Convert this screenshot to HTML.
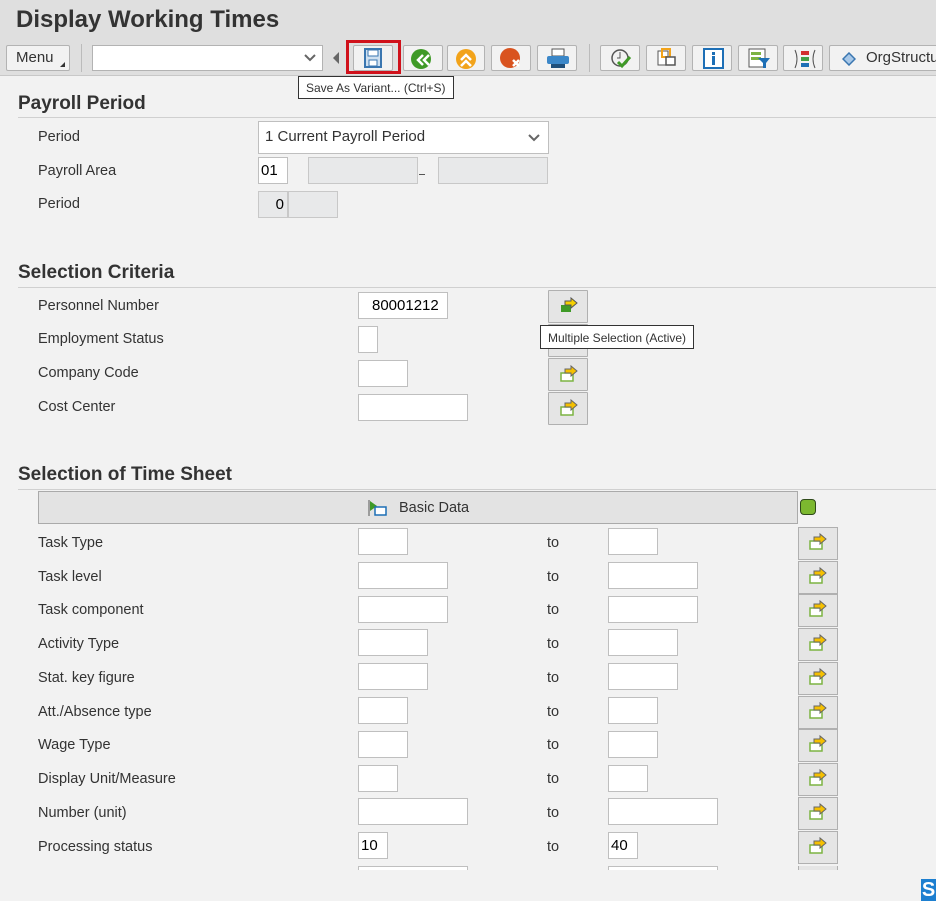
<!DOCTYPE html>
<html><head><meta charset="utf-8"><style>
*{box-sizing:border-box;margin:0;padding:0}
body{width:940px;height:910px;background:#fff;font-family:"Liberation Sans",Arial,sans-serif;position:relative;overflow:hidden;color:#333}
#app{position:absolute;left:0;top:0;width:936px;height:901px;background:#f2f2f2;overflow:hidden}
.hdr{position:absolute;left:0;top:0;width:936px;height:76px;background:#dfdfdf;border-bottom:1px solid #c8c8c8}
h1{position:absolute;left:16px;top:6px;font-size:24px;font-weight:bold;color:#333}
.a{position:absolute}
.tb{position:absolute;top:45px;height:26px;border:1px solid #b3b3b3;background:#f2f2f2;border-radius:2px}
.lbl{position:absolute;left:38px;font-size:14.5px;color:#333}
.h2{position:absolute;left:18px;font-size:19px;font-weight:bold;color:#333}
.line{position:absolute;left:18px;width:918px;height:1px;background:#d0d0d0}
.in{position:absolute;height:27px;background:#fff;border:1px solid #bfbfbf;font-size:15px;padding:4px 0 0 2px;color:#000}
.ro{position:absolute;height:27px;background:#e8e9ea;border:1px solid #c8c8c8}
.btn{position:absolute;width:40px;height:33px;background:#e5e5e5;border:1px solid #b0b0b0;border-radius:1px}
.to{position:absolute;left:547px;font-size:14.5px;color:#333}
.tip{position:absolute;background:#fff;border:1px solid #333;font-size:12px;color:#333;padding:4px 7px;white-space:nowrap}
</style></head><body>
<div id="app">
<div class="hdr"></div>
<h1>Display Working Times</h1>
<div class="tb" style="left:6px;width:64px;font-size:15px;padding:3px 0 0 9px;color:#333">Menu<span style="position:absolute;right:4px;bottom:3px;width:0;height:0;border-left:5px solid transparent;border-bottom:5px solid #333"></span></div>
<div class="a" style="left:81px;top:44px;width:1px;height:28px;background:#bbb"></div>
<div class="tb" style="left:92px;width:231px;background:#fff;border-radius:0"><svg class="a" style="right:6px;top:8px" width="12" height="8"><path d="M1 1l5 5 5-5" stroke="#666" stroke-width="2" fill="none"/></svg></div>
<svg class="a" style="left:333px;top:52px" width="6" height="12"><path d="M6 0v12L0 6z" fill="#666"/></svg>
<div class="tb" style="left:353px;width:40px"><svg class="a" style="left:9px;top:2px" width="20" height="20"><rect x="2" y="1" width="16" height="18" fill="#cfe0f0" stroke="#3a76b0" stroke-width="2"/><rect x="5" y="2" width="10" height="6" fill="#fff" stroke="#3a76b0"/><rect x="6" y="12" width="8" height="6" fill="#fff" stroke="#3a76b0"/></svg></div>
<div class="a" style="left:346px;top:40px;width:55px;height:34px;border:3px solid #d0111b"></div>
<div class="tb" style="left:403px;width:40px"><svg class="a" style="left:6px;top:2px" width="24" height="22"><circle cx="11" cy="11" r="10" fill="#3f9a27"/><path d="M19 7l-5 5 5 5M13 7l-5 5 5 5" stroke="#fff" stroke-width="2.5" fill="none"/></svg></div>
<div class="tb" style="left:447px;width:38px"><svg class="a" style="left:7px;top:2px" width="22" height="22"><circle cx="11" cy="11" r="10" fill="#f2a31a"/><path d="M6 12l5-5 5 5M6 18l5-5 5 5" stroke="#fff" stroke-width="2.5" fill="none"/></svg></div>
<div class="tb" style="left:491px;width:40px"><svg class="a" style="left:8px;top:2px" width="24" height="22"><circle cx="10" cy="10" r="10" fill="#d9531f"/><path d="M13 12l6 6M19 12l-6 6" stroke="#fff" stroke-width="2.5"/></svg></div>
<div class="tb" style="left:537px;width:40px"><svg class="a" style="left:8px;top:2px" width="24" height="22"><rect x="6" y="1" width="12" height="7" fill="#fff" stroke="#555"/><rect x="1" y="8" width="22" height="8" rx="2" fill="#3b87c8"/><rect x="5" y="16" width="14" height="4" fill="#1f4f7a"/></svg></div>
<div class="a" style="left:589px;top:44px;width:1px;height:28px;background:#bbb"></div>
<div class="tb" style="left:600px;width:40px"><svg class="a" style="left:10px;top:3px" width="22" height="20"><circle cx="9" cy="9" r="8" fill="none" stroke="#555" stroke-width="1.5"/><path d="M9 3v6h-3" stroke="#555" fill="none"/><path d="M7 13l4 4 8-9" stroke="#3f9a27" stroke-width="3" fill="none"/></svg></div>
<div class="tb" style="left:646px;width:40px"><svg class="a" style="left:9px;top:2px" width="22" height="22"><rect x="2" y="3" width="10" height="14" fill="#fff" stroke="#555"/><rect x="6" y="1" width="8" height="8" fill="none" stroke="#f2a31a" stroke-width="2"/><rect x="10" y="9" width="9" height="8" fill="#fff" stroke="#555" stroke-width="1.5"/></svg></div>
<div class="tb" style="left:692px;width:40px"><svg class="a" style="left:10px;top:2px" width="22" height="22"><rect x="1" y="1" width="19" height="19" fill="#fff" stroke="#1d6fb6" stroke-width="2"/><rect x="9" y="4" width="3" height="3" fill="#1d6fb6"/><rect x="9" y="8" width="3" height="9" fill="#1d6fb6"/></svg></div>
<div class="tb" style="left:738px;width:40px"><svg class="a" style="left:9px;top:2px" width="24" height="22"><rect x="1" y="1" width="16" height="18" fill="#fff" stroke="#555"/><rect x="3" y="4" width="10" height="3" fill="#7cb342"/><rect x="3" y="9" width="10" height="3" fill="#7cb342"/><path d="M10 10h12l-4 5v5h-3v-5z" fill="#1d6fb6"/></svg></div>
<div class="tb" style="left:783px;width:40px"><svg class="a" style="left:9px;top:2px" width="24" height="22"><path d="M2 2q4 9 0 18M22 2q-4 9 0 18" stroke="#555" fill="none"/><rect x="8" y="3" width="8" height="4" fill="#d32f2f"/><rect x="8" y="9" width="8" height="4" fill="#43a047"/><rect x="8" y="15" width="8" height="4" fill="#1d6fb6"/></svg></div>
<div class="tb" style="left:829px;width:120px;font-size:15px;padding:3px 0 0 36px">OrgStructure<svg class="a" style="left:12px;top:6px" width="14" height="14"><path d="M7 1l6 6-6 6-6-6z" fill="#a8c8e8" stroke="#3a76b0" stroke-width="1.5"/></svg></div>
<div class="tip" style="left:298px;top:76px;height:23px;padding-top:4px">Save As Variant... (Ctrl+S)</div>

<div class="h2" style="top:93px">Payroll Period</div><div class="line" style="top:117px"></div>
<div class="lbl" style="top:129px">Period</div>
<div class="in" style="left:258px;top:121px;width:291px;height:33px;padding:6px 0 0 6px;font-family:'Liberation Sans';font-size:15px;color:#333">1 Current Payroll Period<svg class="a" style="right:8px;top:12px" width="12" height="8"><path d="M1 1l5 5 5-5" stroke="#666" stroke-width="2" fill="none"/></svg></div>
<div class="lbl" style="top:163px">Payroll Area</div>
<div class="in" style="left:258px;top:157px;width:30px">01</div>
<div class="ro" style="left:308px;top:157px;width:110px"></div>
<div class="a" style="left:419px;top:174px;width:6px;height:1px;background:#555"></div>
<div class="ro" style="left:438px;top:157px;width:110px"></div>
<div class="lbl" style="top:196px">Period</div>
<div class="ro" style="left:258px;top:191px;width:30px;font-size:15px;text-align:right;padding:4px 3px 0 0;color:#000">0</div>
<div class="ro" style="left:288px;top:191px;width:50px"></div>

<div class="h2" style="top:262px">Selection Criteria</div><div class="line" style="top:287px"></div>
<div class="lbl" style="top:298px">Personnel Number</div>
<div class="in" style="left:358px;top:292px;width:90px;padding-left:13px">80001212</div>
<div class="lbl" style="top:331px">Employment Status</div>
<div class="in" style="left:358px;top:326px;width:20px"></div>
<div class="lbl" style="top:365px">Company Code</div>
<div class="in" style="left:358px;top:360px;width:50px"></div>
<div class="lbl" style="top:399px">Cost Center</div>
<div class="in" style="left:358px;top:394px;width:110px"></div>
<div class="btn" style="left:548px;top:290px"><svg class="a" style="left:10px;top:6px" width="20" height="18"><rect x="2" y="8" width="10" height="7" fill="#3f9a27"/><path d="M6 4h6V1l6 5-6 5V8H6z" fill="#f5d000" stroke="#555"/></svg></div>
<div class="btn" style="left:548px;top:324px"></div>
<div class="btn" style="left:548px;top:358px"><svg class="a" style="left:10px;top:6px" width="20" height="18"><rect x="2" y="8" width="12" height="8" fill="#fff" stroke="#7cb342" stroke-width="1.5"/><path d="M6 4h6V1l6 5-6 5V8H6z" fill="#f5c000" stroke="#666"/></svg></div>
<div class="btn" style="left:548px;top:392px"><svg class="a" style="left:10px;top:6px" width="20" height="18"><rect x="2" y="8" width="12" height="8" fill="#fff" stroke="#7cb342" stroke-width="1.5"/><path d="M6 4h6V1l6 5-6 5V8H6z" fill="#f5c000" stroke="#666"/></svg></div>
<div class="tip" style="left:540px;top:325px;height:24px;padding-top:5px">Multiple Selection (Active)</div>

<div class="h2" style="top:464px">Selection of Time Sheet</div><div class="line" style="top:489px"></div>
<div class="a" style="left:38px;top:491px;width:760px;height:33px;background:#e3e3e3;border:1px solid #aaa;font-size:14.5px;padding:8px 0 0 360px;color:#333">Basic Data<svg class="a" style="left:329px;top:7px" width="20" height="18"><path d="M1 1v16" stroke="#555"/><path d="M2 2l7 5-7 5z" fill="#3f9a27"/><rect x="7" y="8" width="11" height="8" fill="#fff" stroke="#1d6fb6" stroke-width="1.5"/></svg></div>
<div class="a" style="left:800px;top:499px;width:16px;height:16px;background:#7cb82f;border:1.5px solid #2f4a1a;border-radius:4px"></div>

<div class="lbl" style="top:535px">Task Type</div><div class="in" style="left:358px;top:528px;width:50px"></div><div class="to" style="top:535px">to</div><div class="in" style="left:608px;top:528px;width:50px"></div>
<div class="lbl" style="top:569px">Task level</div><div class="in" style="left:358px;top:562px;width:90px"></div><div class="to" style="top:569px">to</div><div class="in" style="left:608px;top:562px;width:90px"></div>
<div class="lbl" style="top:602px">Task component</div><div class="in" style="left:358px;top:596px;width:90px"></div><div class="to" style="top:602px">to</div><div class="in" style="left:608px;top:596px;width:90px"></div>
<div class="lbl" style="top:636px">Activity Type</div><div class="in" style="left:358px;top:629px;width:70px"></div><div class="to" style="top:636px">to</div><div class="in" style="left:608px;top:629px;width:70px"></div>
<div class="lbl" style="top:670px">Stat. key figure</div><div class="in" style="left:358px;top:663px;width:70px"></div><div class="to" style="top:670px">to</div><div class="in" style="left:608px;top:663px;width:70px"></div>
<div class="lbl" style="top:704px">Att./Absence type</div><div class="in" style="left:358px;top:697px;width:50px"></div><div class="to" style="top:704px">to</div><div class="in" style="left:608px;top:697px;width:50px"></div>
<div class="lbl" style="top:737px">Wage Type</div><div class="in" style="left:358px;top:731px;width:50px"></div><div class="to" style="top:737px">to</div><div class="in" style="left:608px;top:731px;width:50px"></div>
<div class="lbl" style="top:771px">Display Unit/Measure</div><div class="in" style="left:358px;top:765px;width:40px"></div><div class="to" style="top:771px">to</div><div class="in" style="left:608px;top:765px;width:40px"></div>
<div class="lbl" style="top:805px">Number (unit)</div><div class="in" style="left:358px;top:798px;width:110px"></div><div class="to" style="top:805px">to</div><div class="in" style="left:608px;top:798px;width:110px"></div>
<div class="lbl" style="top:839px">Processing status</div><div class="in" style="left:358px;top:832px;width:30px">10</div><div class="to" style="top:839px">to</div><div class="in" style="left:608px;top:832px;width:30px">40</div>
<div class="a" style="left:0;top:866px;width:936px;height:4px;overflow:hidden"><div class="in" style="left:358px;top:0;width:110px"></div><div class="in" style="left:608px;top:0;width:110px"></div><div class="btn" style="left:798px;top:-2px"></div></div>

<div id="bt"></div>
<div class="a" style="left:921px;top:879px;width:15px;height:22px;background:#1d7fd0;color:#fff;font-weight:bold;font-size:20px;line-height:22px;text-align:center">S</div>
</div>
<div class="a" style="left:798px;top:527px">
<svg width="40" height="340" style="position:absolute;left:0;top:0">
<defs><g id="b"><rect x="0.5" y="0.5" width="39" height="32" fill="#e5e5e5" stroke="#b0b0b0"/><rect x="12" y="14" width="12" height="8" fill="#fff" stroke="#7cb342" stroke-width="1.5"/><path d="M16 10h6V7l6 5-6 5v-3h-6z" fill="#f5c000" stroke="#666"/></g></defs>
<use href="#b" y="0"/><use href="#b" y="34"/><use href="#b" y="67"/><use href="#b" y="101"/><use href="#b" y="135"/><use href="#b" y="169"/><use href="#b" y="202"/><use href="#b" y="236"/><use href="#b" y="270"/><use href="#b" y="304"/>
</svg></div>
</body></html>
